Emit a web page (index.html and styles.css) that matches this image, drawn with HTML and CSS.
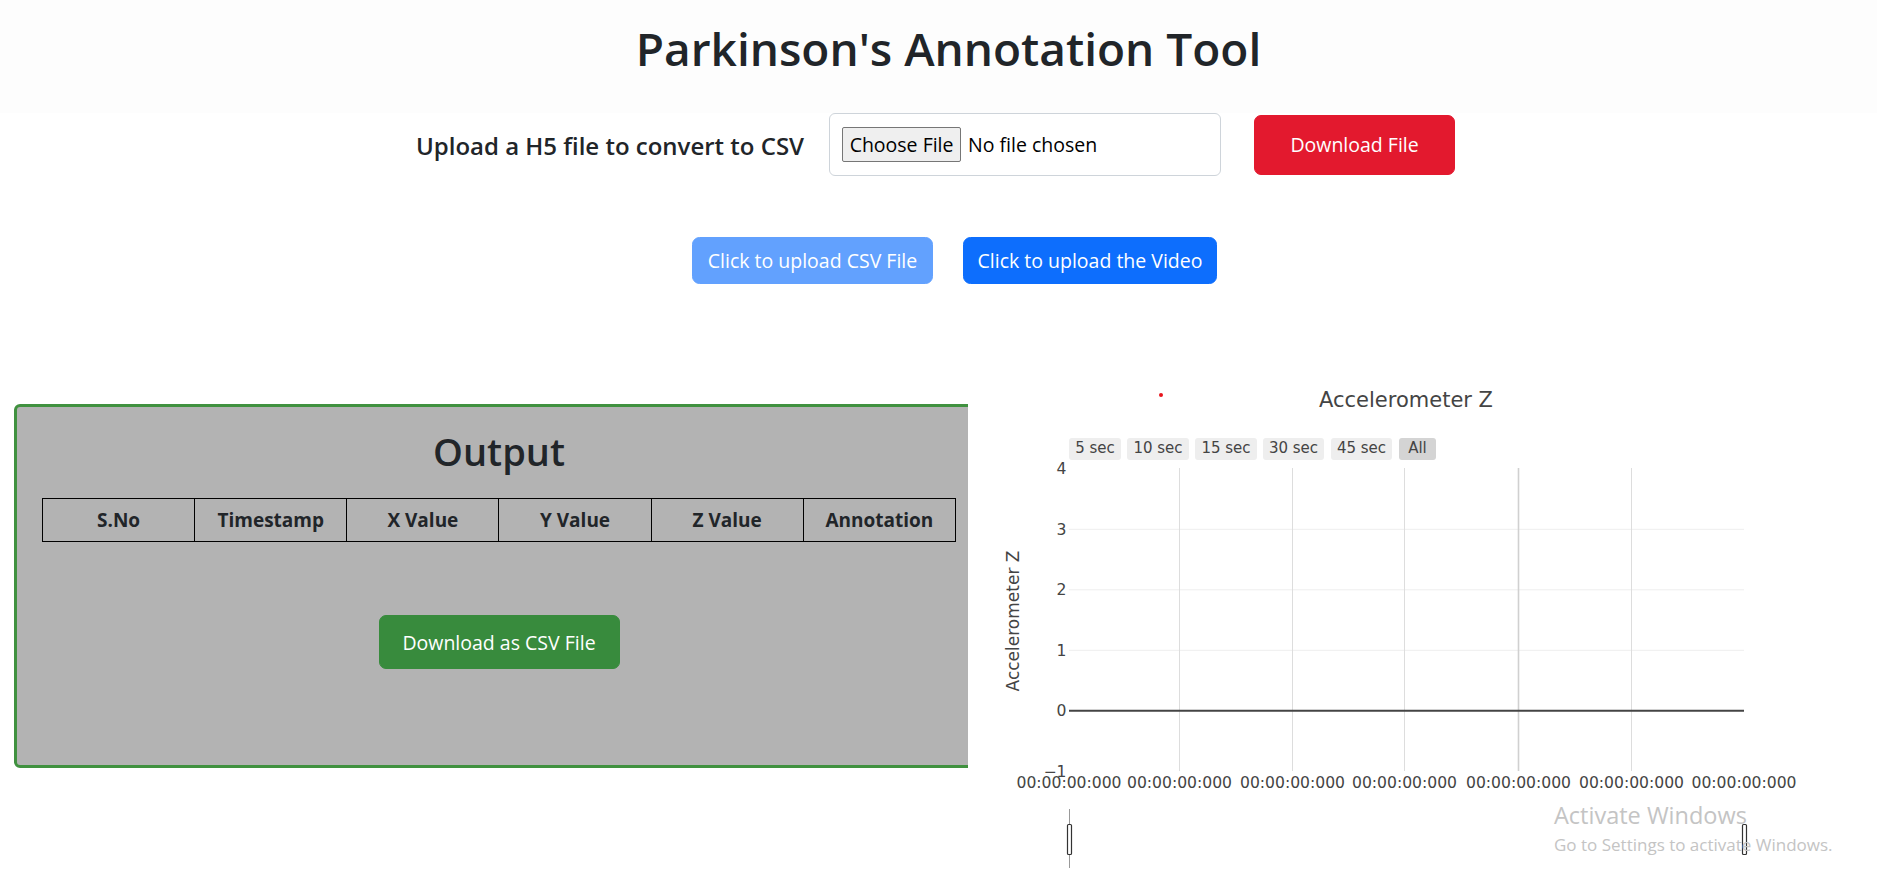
FILE: index.html
```html
<!DOCTYPE html>
<html lang="en">
<head>
<meta charset="utf-8">
<title>Parkinson's Annotation Tool</title>
<link rel="stylesheet" href="styles.css">
</head>
<body>
  <header class="top">
    <h1 class="title">Parkinson's Annotation Tool</h1>
  </header>

  <section class="upload-row">
    <h5 class="upload-label">Upload a H5 file to convert to CSV</h5>
    <div class="file-box">
      <span class="file-btn">Choose File</span>
      <span class="file-name">No file chosen</span>
    </div>
    <button class="btn btn-danger">Download File</button>
  </section>

  <section class="action-row">
    <button class="btn btn-primary btn-disabled btn-csv">Click to upload CSV File</button>
    <button class="btn btn-primary btn-video">Click to upload the Video</button>
  </section>

  <main class="main-row">
    <div class="output-panel">
      <h2 class="output-title">Output</h2>
      <table class="output-table">
        <thead>
          <tr>
            <th>S.No</th>
            <th>Timestamp</th>
            <th>X Value</th>
            <th>Y Value</th>
            <th>Z Value</th>
            <th>Annotation</th>
          </tr>
        </thead>
      </table>
      <div class="download-wrap">
        <button class="btn btn-success">Download as CSV File</button>
      </div>
    </div>

    <div class="chart">
      <svg class="chart-svg" width="909" height="503" viewBox="0 0 909 503" xmlns="http://www.w3.org/2000/svg">
        <circle cx="193" cy="25" r="2" fill="#e8141c"/>
        <text class="chart-title" x="438" y="36.7" text-anchor="middle">Accelerometer Z</text>

        <g class="range-btns">
          <rect x="101" y="68" width="52" height="22" rx="3" fill="#eeeeee"/>
          <text x="127" y="82.7" text-anchor="middle">5 sec</text>
          <rect x="159" y="68" width="62" height="22" rx="3" fill="#eeeeee"/>
          <text x="190" y="82.7" text-anchor="middle">10 sec</text>
          <rect x="227" y="68" width="62" height="22" rx="3" fill="#eeeeee"/>
          <text x="258" y="82.7" text-anchor="middle">15 sec</text>
          <rect x="295" y="68" width="61" height="22" rx="3" fill="#eeeeee"/>
          <text x="325.5" y="82.7" text-anchor="middle">30 sec</text>
          <rect x="363" y="68" width="61" height="22" rx="3" fill="#eeeeee"/>
          <text x="393.5" y="82.7" text-anchor="middle">45 sec</text>
          <rect x="431" y="68" width="37" height="22" rx="3" fill="#d4d4d4"/>
          <text x="449.5" y="82.7" text-anchor="middle">All</text>
        </g>

        <g class="grid-h" stroke="#eeeeee" stroke-width="1">
          <line x1="101" y1="159.3" x2="776" y2="159.3"/>
          <line x1="101" y1="219.8" x2="776" y2="219.8"/>
          <line x1="101" y1="280.3" x2="776" y2="280.3"/>
        </g>
        <g class="grid-v" stroke="#dddddd" stroke-width="1">
          <line x1="211.5" y1="98" x2="211.5" y2="401"/>
          <line x1="324.5" y1="98" x2="324.5" y2="401"/>
          <line x1="436.5" y1="98" x2="436.5" y2="401"/>
          <line x1="550.5" y1="98" x2="550.5" y2="401" stroke="#d0d0d0" stroke-width="1.6"/>
          <line x1="663.5" y1="98" x2="663.5" y2="401"/>
        </g>
        <line x1="101" y1="340.8" x2="776" y2="340.8" stroke="#444444" stroke-width="2"/>

        <g class="ticks-y" text-anchor="end">
          <text x="98.5" y="104.3">4</text>
          <text x="98.5" y="164.8">3</text>
          <text x="98.5" y="225.3">2</text>
          <text x="98.5" y="285.8">1</text>
          <text x="98.5" y="346.3">0</text>
          <text x="98.5" y="406.8">−1</text>
        </g>

        <g class="ticks-x" text-anchor="middle">
          <text x="101" y="417.7">00:00:00:000</text>
          <text x="211.5" y="417.7">00:00:00:000</text>
          <text x="324.5" y="417.7">00:00:00:000</text>
          <text x="436.5" y="417.7">00:00:00:000</text>
          <text x="550.5" y="417.7">00:00:00:000</text>
          <text x="663.5" y="417.7">00:00:00:000</text>
          <text x="776" y="417.7">00:00:00:000</text>
        </g>

        <text class="axis-title" transform="translate(51 251) rotate(-90)" text-anchor="middle">Accelerometer Z</text>

        <line x1="101.5" y1="439" x2="101.5" y2="498" stroke="#999999" stroke-width="1"/>
        <rect x="99.5" y="454.5" width="4" height="30" rx="1" fill="#ffffff" stroke="#333333" stroke-width="1.2"/>
        <rect x="774.5" y="454.5" width="4" height="30" rx="1" fill="#ffffff" stroke="#333333" stroke-width="1.2"/>
      </svg>
    </div>
  </main>

  <div class="watermark">
    <div class="wm-title">Activate Windows</div>
    <div class="wm-sub">Go to Settings to activate Windows.</div>
  </div>
</body>
</html>
```

FILE: styles.css
```css
* {
  box-sizing: border-box;
}

html, body {
  margin: 0;
  padding: 0;
}

body {
  width: 1877px;
  height: 873px;
  overflow: hidden;
  position: relative;
  background: #ffffff;
  color: #212529;
  font-family: "Open Sans", "Noto Sans", "Liberation Sans", sans-serif;
}

.top {
  height: 113px;
  background: #fdfdfd;
  padding-top: 18px;
}

.title {
  margin: 0;
  padding-left: 20px;
  text-align: center;
  font-size: 46px;
  line-height: 60px;
  font-weight: 600;
  color: #212529;
}

.upload-row {
  display: flex;
  justify-content: center;
  align-items: center;
  height: 63px;
  padding-right: 6px;
}

.upload-label {
  margin: 0 25px 0 0;
  font-size: 24px;
  line-height: 30px;
  font-weight: 600;
  color: #212529;
  padding-top: 3px;
}

.file-box {
  width: 392px;
  height: 63px;
  border: 1px solid #ced4da;
  border-radius: 6px;
  background: #ffffff;
  display: flex;
  align-items: center;
  padding-left: 12px;
  font-size: 19.5px;
  color: #212529;
}

.file-btn {
  display: inline-block;
  width: 119px;
  height: 35px;
  line-height: 33px;
  text-align: center;
  background: #efefef;
  border: 1px solid #767676;
  border-radius: 2px;
  color: #000000;
  margin-right: 7px;
}

.file-name {
  color: #000000;
}

.btn {
  font-family: inherit;
  font-size: 19.5px;
  font-weight: 400;
  border: 1px solid transparent;
  color: #ffffff;
  cursor: pointer;
  padding: 0;
  text-align: center;
}

.btn-danger {
  width: 201px;
  height: 60px;
  margin-left: 33px;
  background: #e3192e;
  border-color: #e3192e;
  border-radius: 7px;
}

.action-row {
  display: flex;
  justify-content: center;
  gap: 30px;
  padding-left: 32px;
  margin-top: 61px;
}

.btn-primary {
  height: 47px;
  border-radius: 7.5px;
  background: #0d6efd;
  border-color: #0d6efd;
}

.btn-disabled {
  background: #62a1fe;
  border-color: #62a1fe;
}

.btn-csv {
  width: 241px;
}

.btn-video {
  width: 254px;
}

.main-row {
  display: flex;
  align-items: flex-start;
  margin-top: 86px;
}

.output-panel {
  margin-left: 14px;
  margin-top: 34px;
  width: 970px;
  height: 364px;
  flex: none;
  background: #b3b3b3;
  border: 3px solid #40913f;
  border-radius: 6px;
  padding: 21px 25px 0 25px;
}

.output-title {
  margin: 0;
  text-align: center;
  font-size: 38px;
  line-height: 46px;
  font-weight: 600;
  color: #212529;
}

.output-table {
  margin-top: 24px;
  width: 914px;
  table-layout: fixed;
  border-collapse: collapse;
}

.output-table th {
  border: 1px solid #000000;
  padding: 6px 0;
  line-height: 30px;
  font-size: 19px;
  font-weight: 700;
  text-align: center;
  color: #212529;
}

.download-wrap {
  display: flex;
  justify-content: center;
  margin-top: 73px;
}

.btn-success {
  width: 241px;
  height: 54px;
  border-radius: 7px;
  background: #388b3d;
  border-color: #388b3d;
}

.chart {
  position: relative;
  z-index: 1;
  margin-left: -16px;
  width: 909px;
  height: 503px;
  background: #ffffff;
  flex: none;
}

.chart-svg {
  display: block;
  font-family: "DejaVu Sans", Verdana, sans-serif;
}

.chart-title {
  font-size: 21px;
  fill: #444444;
}

.range-btns text {
  font-size: 15px;
  fill: #444444;
}

.ticks-y text,
.ticks-x text {
  font-size: 15.6px;
  fill: #444444;
}

.axis-title {
  font-size: 17px;
  fill: #444444;
}

.watermark {
  position: absolute;
  left: 1554px;
  top: 799px;
  z-index: 2;
  color: #c4c4c4;
  font-family: "Open Sans", "Noto Sans", sans-serif;
  pointer-events: none;
}

.wm-title {
  font-size: 23.5px;
  line-height: 32px;
}

.wm-sub {
  font-size: 17px;
  line-height: 24px;
  margin-top: 2px;
}
```
